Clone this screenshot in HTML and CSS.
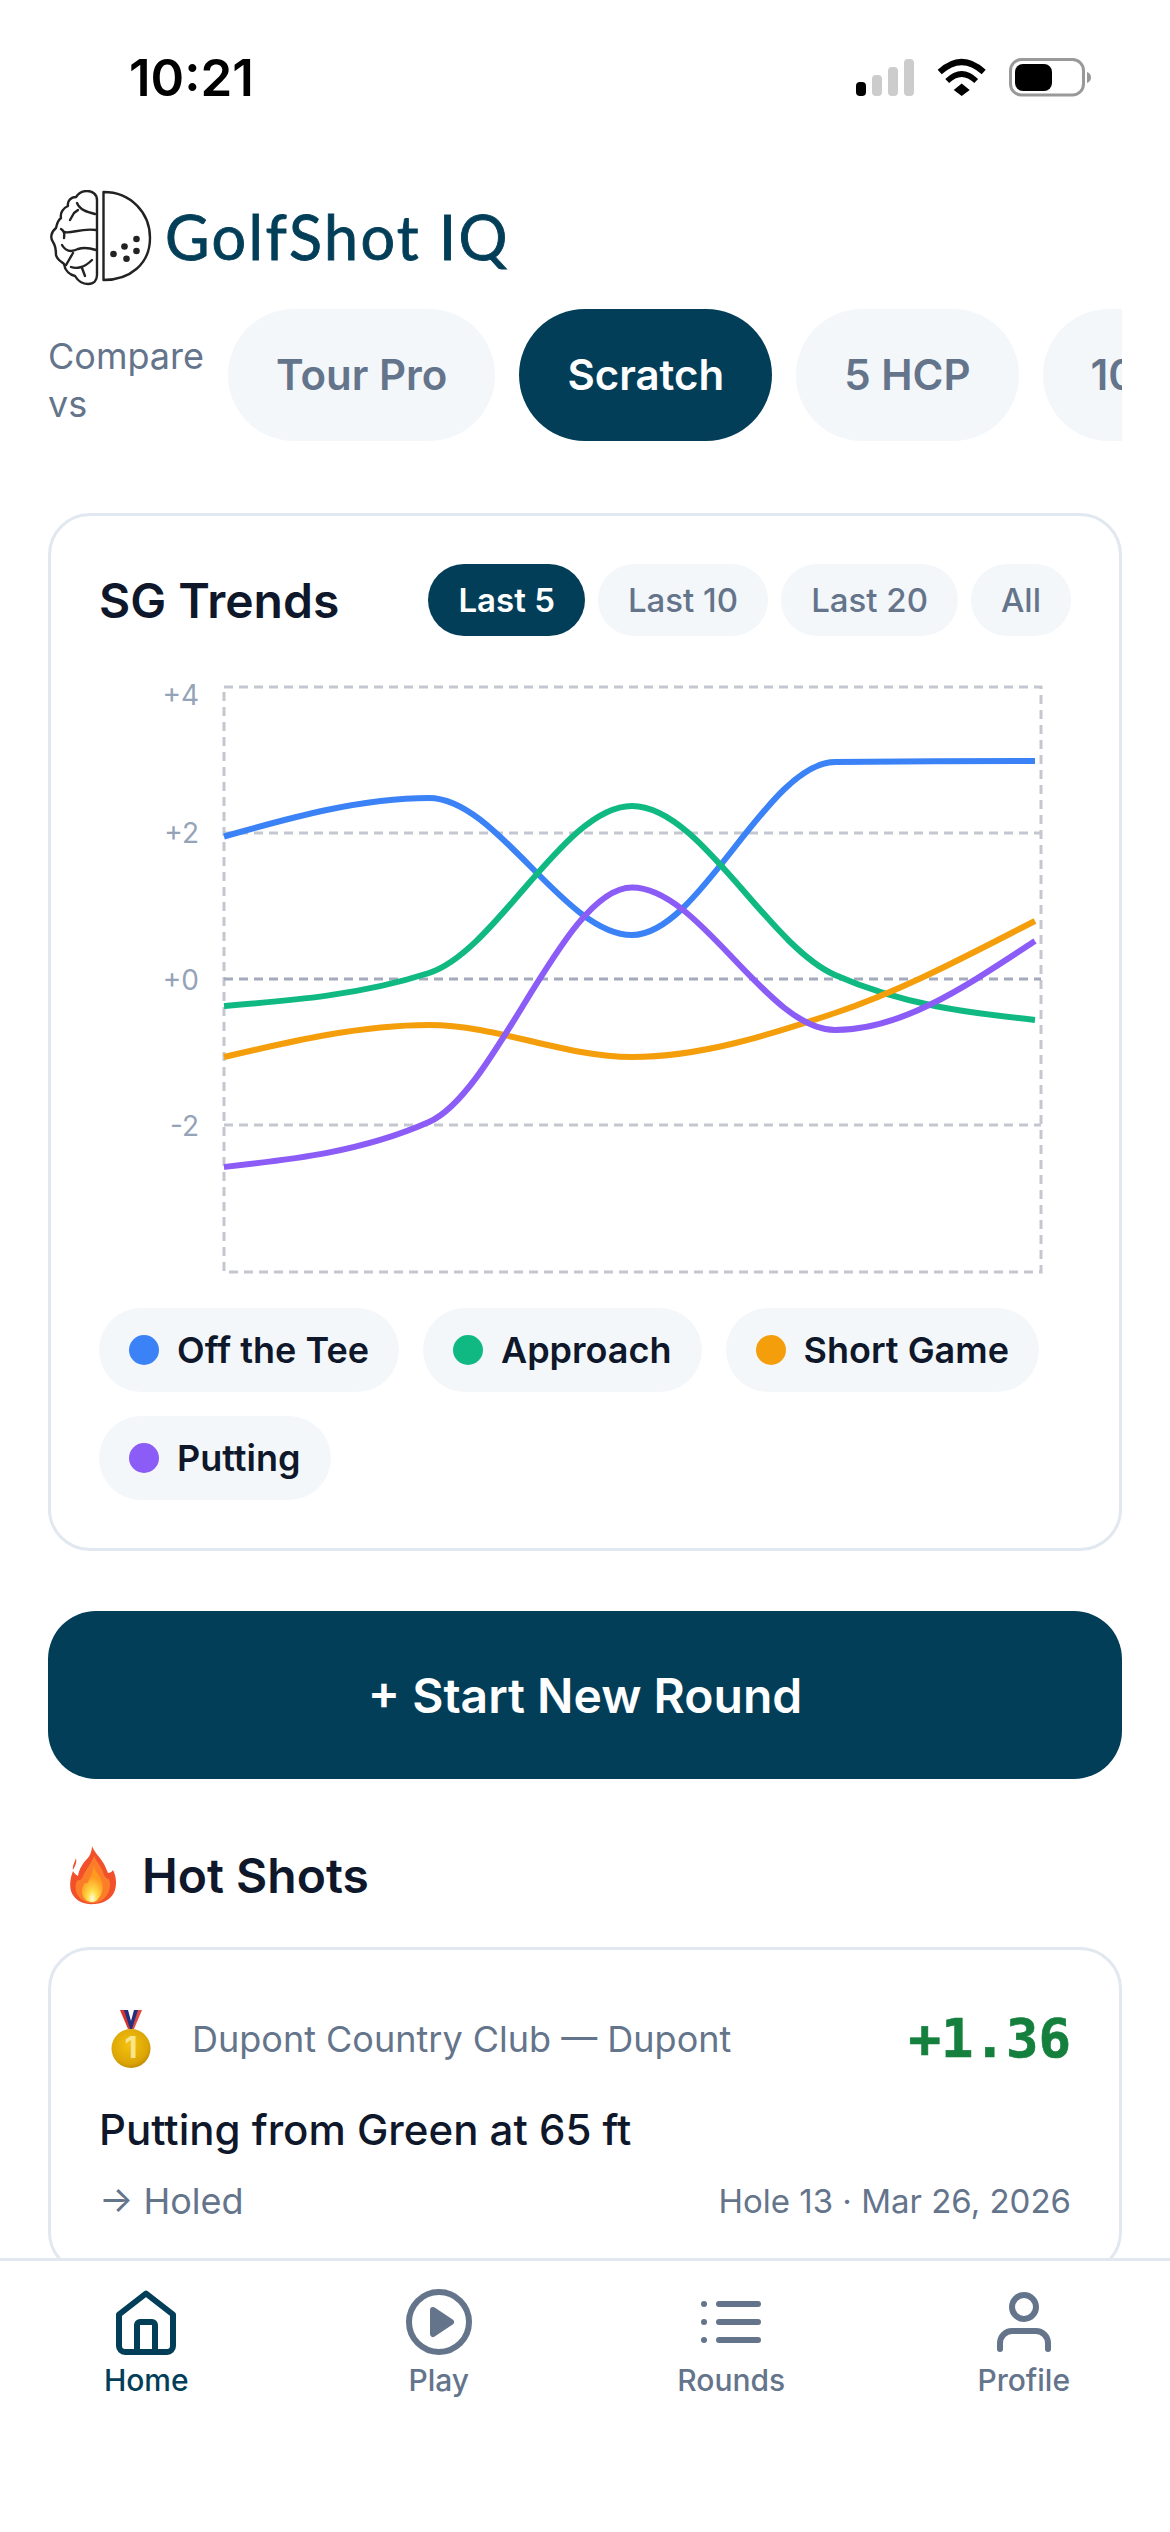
FILE: index.html
```html
<!DOCTYPE html>
<html lang="en">
<head>
    <meta charset="UTF-8">
    <meta name="viewport" content="width=device-width, initial-scale=1.0">
    <title>GolfShot IQ</title>
    <link rel="stylesheet" href="styles.css">
</head>
<body>
<div class="app">
    <div class="status-bar">
        <span class="time">10:21</span>
        <svg class="status-icons" width="240" height="40" viewBox="856 58 240 40">
            <rect x="856" y="82" width="10" height="14" rx="4" fill="#000"/>
            <rect x="872" y="75" width="10" height="21" rx="4" fill="#ccc"/>
            <rect x="888" y="67" width="10" height="29" rx="4" fill="#ccc"/>
            <rect x="904" y="59" width="10" height="37" rx="4" fill="#ccc"/>
            <g transform="translate(936.7 59)" fill="none" stroke="#000">
                <path d="M3 13 Q25 -7 47 13" stroke-width="6"/>
                <path d="M10.5 22 Q25 8 39.5 22" stroke-width="5.5"/>
                <path d="M17 31 L25 24.5 L33 31 L25 37 Z" fill="#000" stroke="none"/>
            </g>
            <rect x="1010.5" y="59.5" width="73" height="35.5" rx="11" fill="none" stroke="#999" stroke-width="3"/>
            <rect x="1015" y="64" width="37" height="27" rx="8" fill="#000"/>
            <path d="M1087 72 C1090 73 1091 75 1091 77.5 C1091 80 1090 82 1087 83 Z" fill="#999"/>
        </svg>
    </div>

    <div class="content">
        <div class="logo">
            <svg class="logo-mark" width="120" height="110" viewBox="0 0 120 110">
                <g fill="none" stroke="#222" stroke-width="2.4" stroke-linecap="round" stroke-linejoin="round">
                    <path d="M57 20 C57 14 52 11 47 11 C42 11 38 14 36 17 C31 17 27 21 28 26 C23 28 20 33 21 38 C17 41 17 45 16 48 C11 52 10 58 13 62 C15 65 16 70 16 75 C17 80 22 82 24 84 C25 91 30 95 35 96 C38 101 43 104 48 104 C54 104 57 100 57 95 Z"/>
                    <path d="M37 23 C40 30 47 32 55 34"/>
                    <path d="M30 40 L34 33 L38 30"/>
                    <path d="M21 49 C26 52 24 56 24 58"/>
                    <path d="M24 52 C32 54 40 48 56 50"/>
                    <path d="M22 65 C26 72 32 72 38 69 C44 67 50 68 56 70"/>
                    <path d="M33 73 C30 78 28 82 26 85"/>
                    <path d="M31 87 C36 89 44 88 52 80"/>
                    <path d="M42 88 L45 96"/>
                    <path d="M63.5 12 C91 12 110 33 110 58 C110 84 90 100 63.5 100 Z"/>
                </g>
                <g fill="#222">
                    <circle cx="73.5" cy="74" r="3.3"/>
                    <circle cx="84.5" cy="66.5" r="3.3"/>
                    <circle cx="96.5" cy="59" r="3.3"/>
                    <circle cx="96.5" cy="71" r="3.3"/>
                    <circle cx="86.5" cy="78.7" r="3.3"/>
                </g>
            </svg>
            <span class="logo-text">GolfShot IQ</span>
        </div>

        <div class="compare">
            <span class="compare-label">Compare vs</span>
            <div class="compare-pills">
                <span class="pill">Tour Pro</span>
                <span class="pill active">Scratch</span>
                <span class="pill">5 HCP</span>
                <span class="pill">10 HCP</span>
            </div>
        </div>

        <div class="card trends">
            <div class="trends-head">
                <h2 class="card-title">SG Trends</h2>
                <div class="ranges">
                    <span class="range active">Last 5</span>
                    <span class="range">Last 10</span>
                    <span class="range">Last 20</span>
                    <span class="range">All</span>
                </div>
            </div>

            <svg class="chart" width="968" height="624" viewBox="100 660 968 624">
                <g fill="none" stroke="#c4c7d0" stroke-width="3" stroke-dasharray="9 6">
                    <rect x="225" y="687" width="817" height="585"/>
                    <line x1="225" y1="833" x2="1042" y2="833"/>
                    <line x1="225" y1="979" x2="1042" y2="979" stroke="#a3aabb"/>
                    <line x1="225" y1="1125" x2="1042" y2="1125"/>
                </g>
                <g class="axis" text-anchor="end">
                    <text x="200" y="705">+4</text>
                    <text x="200" y="843">+2</text>
                    <text x="200" y="990">+0</text>
                    <text x="200" y="1136">-2</text>
                </g>
                <g fill="none" stroke-width="6">
                    <path stroke="#3b82f6" d="M225 836.5 C293 817.25 362 798 430 798 C498 798 565 935 633 935 C701 935 768 762.7 836 762 C904 761.3 968 761.2 1036 761"/>
                    <path stroke="#10b981" d="M225 1006 C293 1000.5 362 995 430 973 C498 951 565 806 633 806 C701 806 768 945 836 975 C904 1005 968 1012.5 1036 1020"/>
                    <path stroke="#f59e0b" d="M225 1057 C293 1041 362 1025 430 1025 C498 1025 565 1057 633 1057 C701 1057 768 1035.7 836 1013 C904 990.3 968 955.7 1036 921"/>
                    <path stroke="#8b5cf6" d="M225 1167 C293 1159.5 362 1152 430 1122 C498 1092 565 887.5 633 887.5 C701 887.5 768 1030 836 1030 C904 1030 968 985.5 1036 941"/>
                </g>
            </svg>

            <div class="legend">
                <span class="chip"><i class="dot dot-tee"></i>Off the Tee</span>
                <span class="chip"><i class="dot dot-approach"></i>Approach</span>
                <span class="chip"><i class="dot dot-short"></i>Short Game</span>
                <span class="chip"><i class="dot dot-putt"></i>Putting</span>
            </div>
        </div>

        <button class="start-btn">+ Start New Round</button>

        <div class="section-title">
            <svg class="flame" width="47" height="59" viewBox="0 0 47 59">
                <defs>
                    <radialGradient id="flameCore" cx="50%" cy="90%" r="60%">
                        <stop offset="0" stop-color="#fffde7"/>
                        <stop offset="0.35" stop-color="#ffe04d"/>
                        <stop offset="1" stop-color="#ff9a1f"/>
                    </radialGradient>
                </defs>
                <path d="M22 0 C24 6 30 11 34 18 C36 22 37 25 38 27 C40 27 42 26 43 24 C46 30 47 37 45 44 C43 51 36 57 25 58 C13 59 4 54 1 45 C-1 38 1 30 3 25 C4 27 6 29 8 30 C9 23 13 17 17 13 C20 10 22 5 22 0 Z" fill="#f2502a"/>
                <path d="M6 12 C5 16 2 20 3 24 C5 20 7 17 6 12 Z" fill="#f2502a"/>
                <path d="M24 10 C26 15 31 20 33 26 C34 30 36 33 39 33 C41 38 40 45 37 49 C33 55 28 57 23 57 C15 57 8 53 6 45 C5 40 6 36 8 34 C10 35 12 33 13 30 C15 25 21 18 24 10 Z" fill="#fb7d2a"/>
                <path d="M24 20 C25 26 30 30 32 36 C34 42 32 49 28 53 C25 57 20 57 16 54 C11 50 11 43 14 38 C15 36 17 38 18 36 C20 32 23 27 24 20 Z" fill="url(#flameCore)"/>
            </svg>
            <h2 class="hot-title">Hot Shots</h2>
        </div>

        <div class="card shot">
            <div class="shot-top">
                <svg class="medal" width="40" height="58" viewBox="0 0 40 58">
                    <defs>
                        <radialGradient id="medalGold" cx="45%" cy="40%" r="65%">
                            <stop offset="0" stop-color="#f4c20d"/>
                            <stop offset="0.75" stop-color="#dba506"/>
                            <stop offset="1" stop-color="#b98404"/>
                        </radialGradient>
                    </defs>
                    <path d="M9 0 L17 19 L23 19 L14 0 Z" fill="#d8342c"/>
                    <path d="M31 0 L23 19 L17 19 L26 0 Z" fill="#e04a40"/>
                    <path d="M13 0 L19 19 L21 19 L27 0 L23 0 L20 11 L17 0 Z" fill="#23307f"/>
                    <circle cx="20" cy="38.5" r="19.5" fill="url(#medalGold)"/>
                    <text class="medal-num" x="20" y="48" text-anchor="middle">1</text>
                </svg>
                <span class="shot-course">Dupont Country Club — Dupont</span>
                <span class="shot-gain">+1.36</span>
            </div>
            <div class="shot-name">Putting from Green at 65 ft</div>
            <div class="shot-bottom">
                <span class="shot-result">→ Holed</span>
                <span class="shot-meta">Hole 13 · Mar 26, 2026</span>
            </div>
        </div>
    </div>

    <div class="tab-bar">
        <div class="tab active">
            <svg class="tab-icon" viewBox="0 0 24 24"><path d="M3 9.5 L12 2.5 L21 9.5 V20 a2 2 0 0 1 -2 2 H5 a2 2 0 0 1 -2 -2 Z"/><path d="M9 22 V13 a1 1 0 0 1 1 -1 h4 a1 1 0 0 1 1 1 V22"/></svg>
            <span>Home</span>
        </div>
        <div class="tab">
            <svg class="tab-icon" viewBox="0 0 24 24"><circle cx="12" cy="12" r="10"/><path class="solid" d="M10 8 L16 12 L10 16 Z"/></svg>
            <span>Play</span>
        </div>
        <div class="tab">
            <svg class="tab-icon" viewBox="0 0 24 24"><path d="M8 6h13M8 12h13M8 18h13"/><path d="M3 6h.01M3 12h.01M3 18h.01"/></svg>
            <span>Rounds</span>
        </div>
        <div class="tab">
            <svg class="tab-icon" viewBox="0 0 24 24"><path d="M20 21v-2a4 4 0 0 0-4-4H8a4 4 0 0 0-4 4v2"/><circle cx="12" cy="7" r="4"/></svg>
            <span>Profile</span>
        </div>
    </div>
</div>
</body>
</html>
```

FILE: styles.css
```css
* {
    box-sizing: border-box;
}

html, body {
    margin: 0;
    padding: 0;
    background: #fff;
}

body {
    font-family: Inter, "Liberation Sans", sans-serif;
    color: #0f172a;
}

.app {
    display: flex;
    flex-direction: column;
    width: 1170px;
    height: 2532px;
    overflow: hidden;
}

/* Status bar */
.status-bar {
    flex: none;
    display: flex;
    justify-content: space-between;
    align-items: flex-start;
    height: 190px;
    padding: 49px 74px 0 129px;
    color: #000;
}

.time {
    font-size: 51px;
    line-height: 58px;
    font-weight: 600;
}

.status-icons {
    margin-top: 9px;
}

/* Main content */
.content {
    flex: 1;
    min-height: 0;
    overflow: hidden;
    padding: 0 48px;
}

.logo {
    display: flex;
    align-items: center;
    height: 92px;
    margin-left: -8px;
}

.logo-mark {
    flex: none;
    margin: -10px 0 -8px 0;
}

.logo-text {
    margin-left: 5px;
    font-family: Lato, sans-serif;
    font-size: 61px;
    letter-spacing: 2.4px;
    color: #023e58;
    -webkit-text-stroke: 0.9px #023e58;
}

.compare {
    display: flex;
    align-items: center;
    gap: 24px;
    margin-top: 27px;
}

.compare-label {
    flex: none;
    width: 156px;
    padding-top: 10px;
    font-size: 36px;
    line-height: 48px;
    color: #64748b;
}

.compare-pills {
    display: flex;
    gap: 24px;
    overflow: hidden;
}

.pill {
    flex: none;
    height: 132px;
    padding: 0 48px;
    border-radius: 66px;
    background: #f4f7fa;
    color: #64748b;
    font-size: 42px;
    font-weight: 600;
    line-height: 132px;
}

.pill.active {
    background: #023e58;
    color: #fff;
}

.card {
    border: 3px solid #e2e8f0;
    border-radius: 42px;
    background: #fff;
}

.trends {
    margin-top: 72px;
    padding: 48px;
}

.trends-head {
    display: flex;
    justify-content: space-between;
    align-items: center;
}

.card-title {
    margin: 0;
    font-size: 48px;
    font-weight: 600;
}

.ranges {
    display: flex;
    gap: 13px;
}

.range {
    height: 72px;
    padding: 0 30px;
    border-radius: 36px;
    background: #f4f7fa;
    color: #64748b;
    font-size: 33px;
    font-weight: 500;
    line-height: 72px;
}

.range.active {
    background: #023e58;
    color: #fff;
    font-weight: 600;
}

.chart {
    display: block;
    margin-top: 24px;
}

.axis {
    font-size: 28px;
    fill: #94a3b8;
}

.legend {
    display: flex;
    flex-wrap: wrap;
    gap: 24px;
    margin-top: 24px;
}

.chip {
    display: flex;
    align-items: center;
    gap: 18px;
    height: 84px;
    padding: 0 30px;
    border-radius: 42px;
    background: #f4f7fa;
    font-size: 36px;
    font-weight: 600;
}

.dot {
    width: 30px;
    height: 30px;
    border-radius: 50%;
}

.dot-tee { background: #3b82f6; }
.dot-approach { background: #10b981; }
.dot-short { background: #f59e0b; }
.dot-putt { background: #8b5cf6; }

.start-btn {
    display: block;
    width: 100%;
    height: 168px;
    margin-top: 60px;
    border: none;
    border-radius: 48px;
    background: #023e58;
    color: #fff;
    font-family: inherit;
    font-size: 48px;
    font-weight: 600;
}

.section-title {
    display: flex;
    align-items: center;
    gap: 25px;
    margin-top: 67px;
    padding-left: 22px;
}

.hot-title {
    margin: 0;
    font-size: 48px;
    line-height: 59px;
    font-weight: 600;
}

.flame {
    flex: none;
}

.shot {
    margin-top: 42px;
    padding: 48px;
    padding-top: 57px;
}

.shot-top {
    display: flex;
    align-items: center;
}

.medal {
    flex: none;
    margin-left: 12px;
}

.medal-num {
    font-size: 30px;
    font-weight: 700;
    fill: #fbe58a;
}

.shot-course {
    flex: 1;
    margin-left: 41px;
    font-size: 36px;
    color: #64748b;
}

.shot-gain {
    font-family: "DejaVu Sans Mono", monospace;
    font-size: 54px;
    font-weight: 700;
    color: #15803d;
    -webkit-text-stroke: 0.6px #15803d;
}

.shot-name {
    margin-top: 34px;
    font-size: 42px;
    line-height: 52px;
    font-weight: 500;
}

.shot-bottom {
    display: flex;
    justify-content: space-between;
    align-items: center;
    margin-top: 23px;
    color: #64748b;
}

.shot-result {
    font-size: 36px;
}

.shot-meta {
    font-size: 33px;
}

/* Bottom tabs */
.tab-bar {
    flex: none;
    display: grid;
    grid-template-columns: repeat(4, 1fr);
    height: 274px;
    padding-top: 25px;
    border-top: 3px solid #e2e8f0;
    background: #fff;
}

.tab {
    display: flex;
    flex-direction: column;
    align-items: center;
    color: #64748b;
    font-size: 30px;
    font-weight: 500;
    line-height: 36px;
}

.tab.active {
    color: #023e58;
}

.tab-icon {
    width: 72px;
    height: 72px;
    margin-bottom: 4px;
    fill: none;
    stroke: currentColor;
    stroke-width: 2;
    stroke-linecap: round;
    stroke-linejoin: round;
}

.tab-icon .solid {
    fill: currentColor;
}
```
